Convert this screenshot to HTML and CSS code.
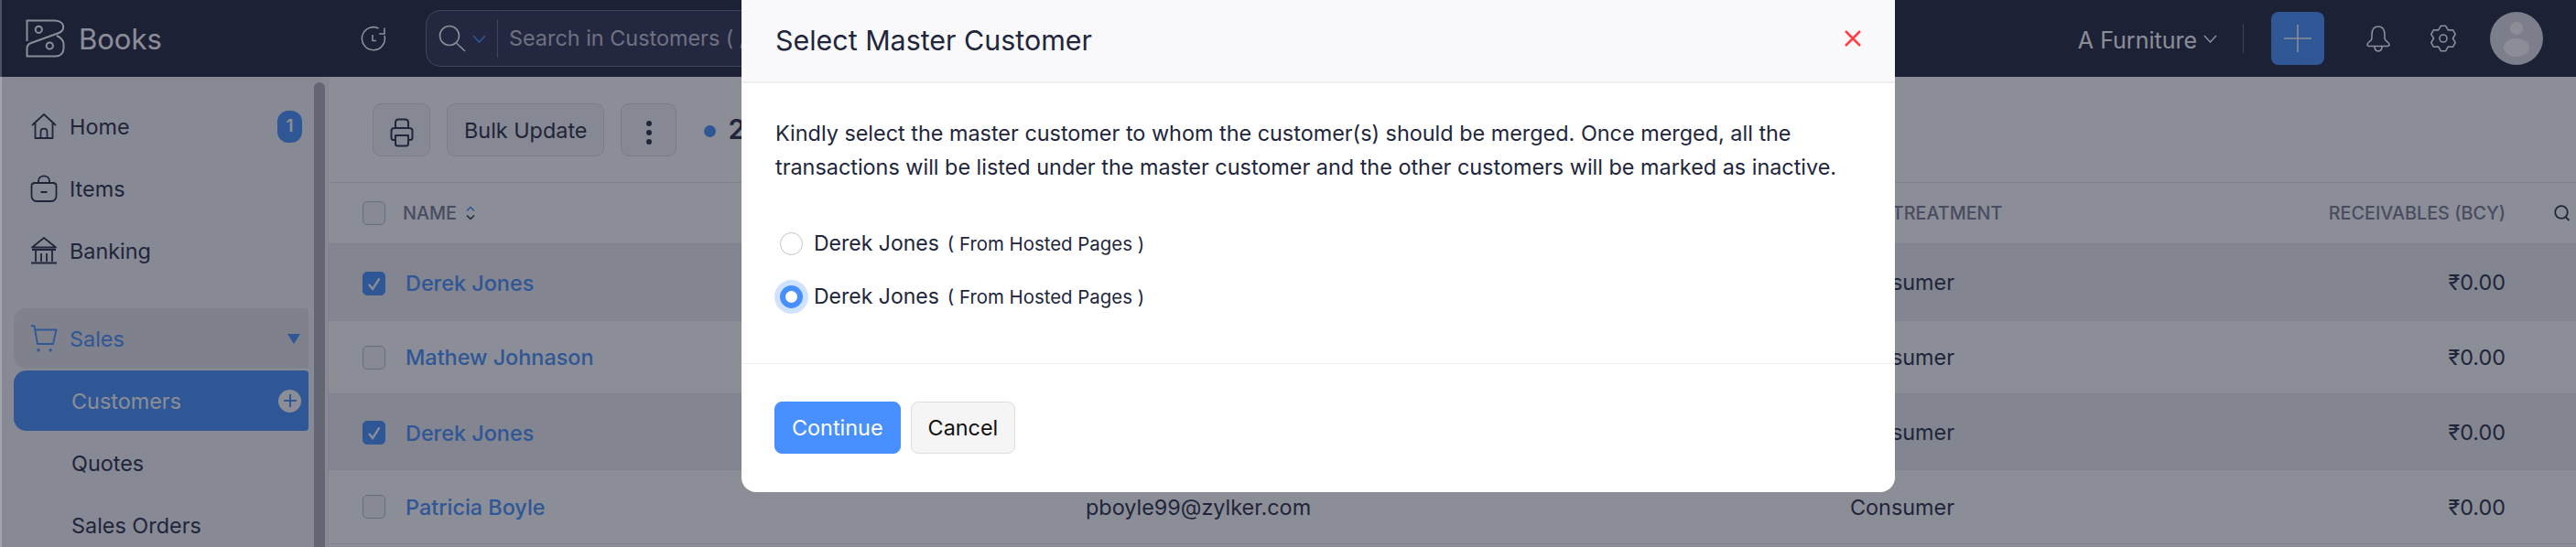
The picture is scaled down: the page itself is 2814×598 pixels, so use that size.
FILE: index.html
```html
<!DOCTYPE html>
<html lang="en">
<head>
  <meta charset="UTF-8" />
  <title>Books - Customers</title>
  <link rel="stylesheet" href="styles.css">
</head>
<body>

  <header class="topbar">
    <div class="brand">
      <svg class="logo" viewBox="0 0 43 42"><path d="M1.5 24V1.5H32C38 1.5 42 5 41 10C40.5 13 38 14.5 35 15.5L6 26C3 27 1.5 29 1.5 32V40.5H33C38 40.5 41.5 37 41.5 32V27C41.5 23 39 20.5 34 18"/><circle cx="14.3" cy="11.3" r="3.6"/><circle cx="26.3" cy="29" r="3.6"/></svg>
      <span class="brand-name">Books</span>
    </div>
    <svg class="history" viewBox="0 0 28 28"><path d="M19.5 3A12.5 12.5 0 1 0 26 11M26 2.5V9H20M13 10V16.5H17"/></svg>
    <div class="search">
      <svg class="search-icon" viewBox="0 0 30 30"><circle cx="12" cy="12" r="10.5"/><path d="M19.5 20L29 29"/></svg>
      <svg class="search-caret" viewBox="0 0 15 9"><path d="M1 1L7.5 8L14 1"/></svg>
      <span class="search-text">Search in Customers ( /</span>
    </div>
    <div class="top-right">
      <span class="org">A Furniture</span>
      <svg class="org-caret" viewBox="0 0 15 9"><path d="M1 1L7.5 8L14 1"/></svg>
      <span class="top-sep"></span>
      <button class="add-btn"><svg viewBox="0 0 30 30"><path d="M15 0V30M0 15H30"/></svg></button>
      <svg class="bell" viewBox="0 0 26 29"><path d="M13 1C8 1 6 5 6 10V14C6 17 1 18 1 20.5C1 22 2 22.5 3 22.5H23C24 22.5 25 22 25 20.5C25 18 20 17 20 14V10C20 5 18 1 13 1ZM9 23C9 29.500 17 29.500 17 23"/></svg>
      <svg class="gear" viewBox="0 0 28 30"><path d="M11.300 1.300H16.700L19.300 5.900L24.600 5.800L27.200 10.400L24.500 15L27.200 19.600L24.600 24.200L19.300 24.100L16.700 28.700H11.300L8.700 24.100L3.400 24.200L.8 19.600L3.500 15L.8 10.400L3.400 5.800L8.700 5.900Z"/><circle cx="14" cy="15" r="4"/></svg>
      <div class="avatar"><span class="avatar-head"></span><span class="avatar-body"></span></div>
    </div>
  </header>

  <div class="app">
    <aside class="sidebar">
      <nav class="nav">
        <div class="nav-item">
          <svg class="nav-icon" viewBox="0 0 30 28"><path d="M2 13L15 1L28 13M5.500 10V27H24.500V10M11.500 27V20C11.500 15.500 18.500 15.500 18.500 20V27"/></svg>
          <span>Home</span><span class="badge">1</span>
        </div>
        <div class="nav-item">
          <svg class="nav-icon" viewBox="0 0 30 30"><path d="M5 9H25C27 9 28.500 10.500 28.500 12.500V23C28.500 26.500 26 29 23 29H7C4 29 1.500 26.500 1.500 23V12.500C1.500 10.500 3 9 5 9ZM9 9V7C9 -.5 21 -.5 21 7V9M11.500 19H18.500"/></svg>
          <span>Items</span>
        </div>
        <div class="nav-item">
          <svg class="nav-icon" viewBox="0 0 30 30"><path d="M2 11.500L15 1L28 11.500ZM2 14H28M6 14V27M12 18V27M18 18V27M24 14V27M1 28.500H29"/></svg>
          <span>Banking</span>
        </div>
        <div class="nav-item nav-group">
          <svg class="nav-icon" viewBox="0 0 30 30"><path d="M1 1L4.500 1.500L8 21H25L28.500 5.500H5"/><path class="dot" d="M9 27.500V28M22 27.500V28"/></svg>
          <span>Sales</span><span class="group-caret"></span>
        </div>
        <div class="nav-item nav-sub active">
          <span>Customers</span>
          <span class="sub-add"><svg viewBox="0 0 14 14"><path d="M7 0V14M0 7H14"/></svg></span>
        </div>
        <div class="nav-item nav-sub">Quotes</div>
        <div class="nav-item nav-sub">Sales Orders</div>
      </nav>
      <div class="scrollbar"></div>
    </aside>

    <main class="main">
      <div class="toolbar">
        <button class="tool-btn icon-btn print-btn"><svg class="print" viewBox="0 0 26 32"><path d="M6 11V5C6 2.500 7.500 1.500 9.500 1.500H16.500C18.500 1.500 20 2.500 20 5V11M6 24H4C2.500 24 1.500 23 1.500 21.500V14C1.500 12 3 11 5 11H21C23 11 24.500 12 24.500 14V21.500C24.500 23 23.500 24 22 24H20M6 19H20V28C20 29.500 19 30.500 17.500 30.500H8.500C7 30.500 6 29.500 6 28Z"/></svg></button>
        <button class="tool-btn">Bulk Update</button>
        <button class="tool-btn icon-btn"><span class="dots"><i></i><i></i><i></i></span></button>
        <span class="sel-dot"></span>
        <span class="sel-count">2</span>
      </div>

      <div class="tbl">
        <div class="row head">
          <span class="check"></span>
          <span class="col-name">NAME <svg class="sort" viewBox="0 0 10 16"><path class="sort-up" d="M1 5.500L5 1.500L9 5.500"/><path d="M1 10.500L5 14.500L9 10.500"/></svg></span>
          <span></span>
          <span>GST TREATMENT</span>
          <span class="num">RECEIVABLES (BCY)</span>
          <svg class="col-search" viewBox="0 0 18 18"><circle cx="8" cy="8" r="6.800"/><path d="M12.500 13L16.500 17"/></svg>
        </div>
        <div class="row sel">
          <span class="check on"><svg viewBox="0 0 25 26"><path d="M6.500 14L11 19.500L19 7"/></svg></span>
          <a class="name">Derek Jones</a><span></span><span>Consumer</span><span class="num">₹0.00</span>
        </div>
        <div class="row">
          <span class="check"></span>
          <a class="name">Mathew Johnason</a><span></span><span>Consumer</span><span class="num">₹0.00</span>
        </div>
        <div class="row sel">
          <span class="check on"><svg viewBox="0 0 25 26"><path d="M6.500 14L11 19.500L19 7"/></svg></span>
          <a class="name">Derek Jones</a><span></span><span>Consumer</span><span class="num">₹0.00</span>
        </div>
        <div class="row">
          <span class="check"></span>
          <a class="name">Patricia Boyle</a><span>pboyle99@zylker.com</span><span>Consumer</span><span class="num">₹0.00</span>
        </div>
      </div>
    </main>
  </div>

  <div class="overlay">
    <div class="modal">
      <div class="modal-head">
        <h4>Select Master Customer</h4>
        <svg class="close" viewBox="0 0 18 18"><path d="M1 1L17 17M17 1L1 17"/></svg>
      </div>
      <div class="modal-body">
        <p>Kindly select the master customer to whom the customer(s) should be merged. Once merged, all the transactions will be listed under the master customer and the other customers will be marked as inactive.</p>
        <label class="pick"><input type="radio" name="master"><span>Derek Jones</span><small>( From Hosted Pages )</small></label>
        <label class="pick"><input type="radio" name="master" checked><span>Derek Jones</span><small>( From Hosted Pages )</small></label>
      </div>
      <div class="modal-foot">
        <button class="btn btn-primary">Continue</button>
        <button class="btn">Cancel</button>
      </div>
    </div>
  </div>

</body>
</html>
```

FILE: styles.css
```css
* { box-sizing: border-box; }
html, body {
  margin: 0;
  height: 598px;
  overflow: hidden;
}
body {
  font-family: 'Inter', 'Noto Sans', sans-serif;
  font-size: 23.4px;
  color: #21263c;
  background: #fff;
}
svg {
  fill: none;
  stroke: currentColor;
  flex-shrink: 0;
}
button {
  font-family: inherit;
}

/* top bar */
.topbar {
  height: 84px;
  background: #181e35;
  color: #fff;
  display: flex;
  align-items: center;
}
.brand {
  width: 359px;
  height: 84px;
  padding-left: 28px;
  display: flex;
  align-items: center;
  gap: 15px;
  border-right: 1px solid #1d233b;
}
.logo {
  width: 43px;
  height: 42px;
  stroke-width: 2;
}
.brand-name {
  font-size: 31px;
}
.history {
  width: 28px;
  height: 28px;
  margin-left: 35px;
  stroke-width: 1.600;
}
.search {
  width: 1400px;
  height: 62px;
  margin-left: 43px;
  padding-left: 13px;
  display: flex;
  align-items: center;
  background: #262c4a;
  border: 1px solid #61677e;
  border-radius: 16px;
}
.search-icon {
  width: 30px;
  height: 30px;
  stroke-width: 1.600;
}
.search-caret {
  width: 15px;
  height: 9px;
  margin-left: 7px;
  color: #408dfb;
  stroke-width: 1.600;
}
.search-text {
  margin-left: 12px;
  padding-left: 12px;
  height: 42px;
  line-height: 42px;
  border-left: 1px solid #61677e;
  color: #c3c4cf;
}
.top-right {
  margin-left: auto;
  padding-right: 36px;
  display: flex;
  align-items: center;
}
.org {
  font-size: 25px;
  margin-top: 3px;
}
.org-caret {
  width: 15px;
  height: 9px;
  margin-left: 7px;
  stroke-width: 1.500;
}
.top-sep {
  width: 1px;
  height: 32px;
  margin: 0 30px 0 28px;
  background: #61677e;
}
.add-btn {
  width: 58px;
  height: 58px;
  padding: 0;
  display: flex;
  align-items: center;
  justify-content: center;
  background: #408dfb;
  color: #fff;
  border: none;
  border-radius: 8px;
}
.add-btn svg {
  width: 30px;
  height: 30px;
  stroke-width: 1.500;
}
.bell {
  width: 26px;
  height: 29px;
  margin-left: 46px;
  stroke-width: 1.600;
}
.gear {
  width: 28px;
  height: 30px;
  margin-left: 44px;
  stroke-width: 1.600;
  stroke-linejoin: round;
}
.avatar {
  width: 58px;
  height: 58px;
  margin-left: 37px;
  border-radius: 50%;
  background: #dfe0e6;
  display: flex;
  flex-direction: column;
  align-items: center;
  overflow: hidden;
}
.avatar-head {
  width: 14px;
  height: 14px;
  margin-top: 11px;
  border-radius: 50%;
  background: #fff;
}
.avatar-body {
  width: 28px;
  height: 20px;
  margin-top: 4px;
  border-radius: 50%;
  background: #fff;
}

/* page under the top bar */
.app {
  display: flex;
  height: 514px;
}
.sidebar {
  width: 359px;
  display: flex;
  flex-shrink: 0;
  background: #f7f6fb;
  border-right: 1px solid #eeeef3;
}
.nav {
  width: 322px;
  margin-left: 15px;
  padding-top: 20px;
  flex-shrink: 0;
}
.nav-item {
  height: 68px;
  padding-left: 18px;
  display: flex;
  align-items: center;
  white-space: nowrap;
}
.nav-icon {
  width: 30px;
  height: 30px;
  margin-right: 13px;
  stroke-width: 1.800;
  stroke-linejoin: round;
}
.nav-icon .dot {
  stroke-width: 3;
  stroke-linecap: round;
}
.badge {
  width: 27px;
  height: 35px;
  margin-left: auto;
  margin-right: 7px;
  border-radius: 12px;
  background: #408dfb;
  color: #fff;
  font-size: 19px;
  font-weight: 600;
  text-align: center;
  line-height: 33px;
}
.nav-group {
  height: 66px;
  margin-top: 29px;
  margin-bottom: 2px;
  background: #e6e6ea;
  border-radius: 14px 4px 4px 14px;
  color: #408dfb;
}
.group-caret {
  margin-left: auto;
  margin-right: 9px;
  border-left: 7px solid transparent;
  border-right: 7px solid transparent;
  border-top: 11px solid #408dfb;
}
.nav-sub {
  padding-left: 63px;
  color: #21263c;
}
.nav-sub.active {
  height: 66px;
  margin-bottom: 1px;
  padding-right: 8px;
  justify-content: space-between;
  background: #408dfb;
  border-radius: 14px 4px 4px 14px;
  color: #fff;
}
.sub-add {
  width: 25px;
  height: 25px;
  display: flex;
  align-items: center;
  justify-content: center;
  border-radius: 50%;
  background: #fff;
  color: #408dfb;
}
.sub-add svg {
  width: 14px;
  height: 14px;
  stroke-width: 2;
}
.scrollbar {
  width: 12px;
  margin: 6px 0 0 6px;
  background: #aeaeb6;
  border-radius: 6px 6px 0 0;
}

.main {
  flex: 1;
  min-width: 0;
}
.toolbar {
  height: 116px;
  padding: 29px 0 0 48px;
  display: flex;
  align-items: flex-start;
  gap: 18px;
  border-bottom: 1px solid #e4e4ea;
}
.tool-btn {
  height: 58px;
  padding: 0 18px;
  display: flex;
  align-items: center;
  justify-content: center;
  background: #f5f5f7;
  color: #21263c;
  border: 1px solid #dcdce2;
  border-radius: 9px;
  font-size: 23.4px;
}
.icon-btn {
  width: 61px;
  padding: 0;
}
.print-btn {
  width: 63px;
}
.print {
  width: 26px;
  height: 32px;
  margin-top: 6px;
  stroke-width: 2;
  stroke-linejoin: round;
}
.dots {
  display: flex;
  flex-direction: column;
  gap: 4px;
  margin-top: 5px;
}
.dots i {
  width: 6px;
  height: 6px;
  border-radius: 50%;
  background: #21263c;
}
.sel-dot {
  width: 13px;
  height: 13px;
  margin: 24px 0 0 12px;
  border-radius: 50%;
  background: #408dfb;
}
.sel-count {
  margin: 10px 0 0 -5px;
  font-size: 30px;
  font-weight: 600;
  color: #21263c;
}

/* table */
.tbl {
  display: grid;
  grid-template-rows: 67px 84px 80px 83px 81px;
}
.row {
  display: grid;
  grid-template-columns: 81px 746px 835px 382px 334px 77px;
  align-items: center;
  border-bottom: 1px solid #e4e4ea;
}
.row.sel {
  background: #eeeef0;
}
.head {
  font-size: 19.8px;
  font-weight: 500;
  color: #777791;
}
.col-name {
  display: flex;
  align-items: center;
  gap: 10px;
}
.sort {
  width: 10px;
  height: 16px;
  color: #21263c;
  stroke-width: 1.500;
}
.sort .sort-up {
  stroke: #408dfb;
}
.col-search {
  width: 18px;
  height: 18px;
  margin-left: 53px;
  color: #21263c;
  stroke-width: 1.800;
}
.check {
  width: 25px;
  height: 26px;
  margin-left: 37px;
  display: block;
  background: #f7f7f9;
  border: 1px solid #b9bcc5;
  border-radius: 5px;
}
.check.on {
  background: #408dfb;
  border-color: #408dfb;
  color: #fff;
  margin-top: 2px;
}
.check svg {
  display: block;
  width: 23px;
  height: 24px;
  stroke-width: 2.500;
}
.name {
  padding-left: 3px;
  font-weight: 500;
  color: #408dfb;
}
.sel .name {
  margin-top: 2px;
}
.num {
  text-align: right;
}

/* dialog */
.overlay {
  position: fixed;
  inset: 0;
  padding-left: 808px;
  background: rgba(32, 36, 55, 0.52);
  border-left: 2px solid rgba(255, 255, 255, 0.22);
}
.modal {
  width: 1260px;
  height: 538px;
  background: #fff;
  border-radius: 0 0 16px 16px;
  color: #21263c;
  overflow: hidden;
}
.modal-head {
  height: 91px;
  padding: 0 37px;
  display: flex;
  align-items: center;
  justify-content: space-between;
  background: #f9f9fb;
  border-bottom: 2px solid #eeeef1;
}
.modal-head h4 {
  margin: -2px 0 0;
  font-size: 30.4px;
  font-weight: 400;
}
.close {
  width: 18px;
  height: 18px;
  color: #ff4040;
  stroke-width: 2.500;
  margin-top: -6px;
}
.modal-body {
  height: 307px;
  padding: 36px 37px 0;
  border-bottom: 1px solid #eeeef1;
}
.modal-body p {
  margin: 0 0 36px;
  line-height: 37px;
}
.pick {
  height: 58px;
  padding-left: 5px;
  display: flex;
  align-items: center;
}
.pick input {
  appearance: none;
  width: 25px;
  height: 25px;
  margin: 0 12px 0 0;
  border: 1px solid #c4c4c8;
  border-radius: 50%;
  background: #fff;
}
.pick input:checked {
  border: 6px solid #4890ff;
  box-shadow: 0 0 0 6px #cfe2ff;
}
.pick span {
  font-size: 23px;
}
.pick small {
  margin-left: 9px;
  font-size: 20.4px;
}
.modal-foot {
  padding: 41px 36px 0;
  display: flex;
  gap: 11px;
}
.btn {
  height: 57px;
  padding: 0 18px;
  background: #f5f5f5;
  color: #111;
  border: 1px solid #ddd;
  border-radius: 8px;
  font-size: 23.4px;
}
.btn-primary {
  background: #4890ff;
  border-color: #4890ff;
  color: #fff;
}
```
